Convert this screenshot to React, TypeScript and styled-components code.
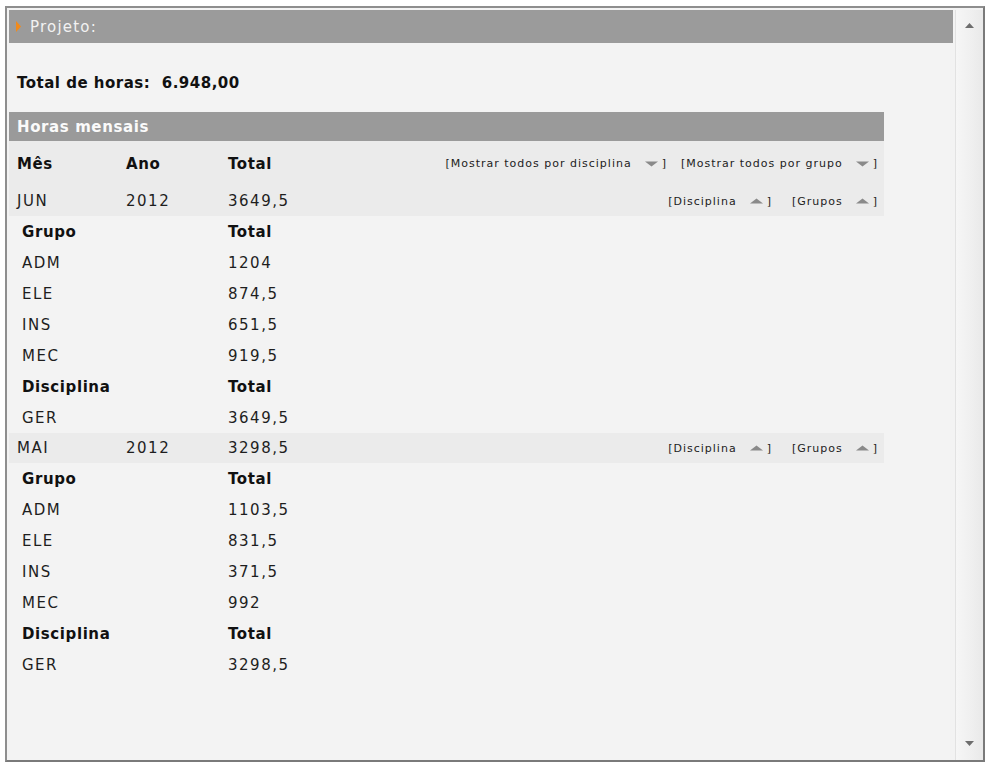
import React from "react";
import styled, { createGlobalStyle } from "styled-components";

const GlobalStyle = createGlobalStyle`
  html, body { margin: 0; padding: 0; background: #ffffff; }
  body { font-family: "DejaVu Sans", Verdana, sans-serif; color: #1c1c1c; }
  * { box-sizing: border-box; }
`;

const Frame = styled.div`
  margin: 6px 0 0 5px;
  width: 980px;
  height: 756px;
  border: 2px solid #8e8e8e;
  border-right-color: #7a7a7a;
  border-bottom-color: #7a7a7a;
  background: #f3f3f3;
  padding: 2px 0 0 2px;
  display: flex;
`;

const Main = styled.div`
  flex: 1;
  display: flex;
  flex-direction: column;
  min-width: 0;
`;

const Scrollbar = styled.div`
  width: 28px;
  margin-left: 2px;
  border-left: 1px solid #e2e2e2;
  background: linear-gradient(to right, #f6f6f6, #efefef 60%, #e9e9e9);
  display: flex;
  flex-direction: column;
  justify-content: space-between;
  align-items: center;
  padding: 13px 0 14px;
`;

const PanelHeader = styled.div`
  height: 33px;
  background: #9b9b9b;
  color: #f2f2f2;
  display: flex;
  align-items: center;
  padding-left: 7px;
  gap: 9px;
  font-size: 15px;
  letter-spacing: 1.2px;
`;

const Content = styled.div`
  padding: 30px 0 0 0;
`;

const TotalLine = styled.div`
  height: 20px;
  line-height: 20px;
  padding-left: 8px;
  font-weight: bold;
  font-size: 15px;
  letter-spacing: 0.5px;
  color: #111;
  margin-bottom: 19px;
`;

const Table = styled.div`
  width: 875px;
  display: flex;
  flex-direction: column;
`;

const TableTitle = styled.div`
  height: 29px;
  background: #9a9a9a;
  color: #fafafa;
  font-weight: bold;
  font-size: 15px;
  letter-spacing: 0.6px;
  display: flex;
  align-items: center;
  padding-left: 8px;
`;

const MonthRow = styled.div<{ $tall?: boolean }>`
  height: ${(p) => (p.$tall ? "45px" : "30px")};
  background: #ebebeb;
  display: grid;
  grid-template-columns: 109px 102px 1fr auto;
  align-items: center;
  padding-left: 8px;
  padding-right: 6px;
  font-size: 15px;
  letter-spacing: ${(p) => (p.$tall ? "0.6px" : "1.5px")};
  font-weight: ${(p) => (p.$tall ? "bold" : "normal")};
  color: ${(p) => (p.$tall ? "#111" : "#1e1e1e")};
`;

const SubRow = styled.div<{ $head?: boolean }>`
  height: 31px;
  display: grid;
  grid-template-columns: 206px 1fr;
  align-items: center;
  padding-left: 13px;
  font-size: 15px;
  letter-spacing: ${(p) => (p.$head ? "0.6px" : "1.5px")};
  font-weight: ${(p) => (p.$head ? "bold" : "normal")};
  color: ${(p) => (p.$head ? "#111" : "#1e1e1e")};
`;

const Links = styled.div<{ $gap: number }>`
  display: flex;
  gap: ${(p) => p.$gap}px;
  font-weight: normal;
  font-size: 11px;
  letter-spacing: 1px;
  color: #222;
`;

const LinkItem = styled.span`
  display: inline-flex;
  align-items: center;
  white-space: nowrap;
`;

const ArrowWrap = styled.span`
  display: inline-flex;
  margin: 0 4px 0 13px;
`;

const Tri = ({ down }: { down?: boolean }) => (
  <svg width="13" height="6" viewBox="0 0 13 6">
    <polygon
      points={down ? "0,0.5 13,0.5 6.5,5.5" : "0,5.5 13,5.5 6.5,0.5"}
      fill="#8a8a8a"
    />
  </svg>
);

const Link = ({ label, down }: { label: string; down?: boolean }) => (
  <LinkItem>
    [{label}
    <ArrowWrap>
      <Tri down={down} />
    </ArrowWrap>
    ]
  </LinkItem>
);

const Marker = () => (
  <svg width="5" height="11" viewBox="0 0 5 11">
    <polygon points="0,0 5,5.5 0,11" fill="#f08a1c" />
  </svg>
);

const ScrollArrow = ({ down }: { down?: boolean }) => (
  <svg width="9" height="5" viewBox="0 0 9 5">
    <polygon
      points={down ? "0,0 9,0 4.5,5" : "0,5 9,5 4.5,0"}
      fill="#6e6e6e"
    />
  </svg>
);

type Month = {
  mes: string;
  ano: string;
  total: string;
  grupos: [string, string][];
  disciplinas: [string, string][];
};

const months: Month[] = [
  {
    mes: "JUN",
    ano: "2012",
    total: "3649,5",
    grupos: [
      ["ADM", "1204"],
      ["ELE", "874,5"],
      ["INS", "651,5"],
      ["MEC", "919,5"],
    ],
    disciplinas: [["GER", "3649,5"]],
  },
  {
    mes: "MAI",
    ano: "2012",
    total: "3298,5",
    grupos: [
      ["ADM", "1103,5"],
      ["ELE", "831,5"],
      ["INS", "371,5"],
      ["MEC", "992"],
    ],
    disciplinas: [["GER", "3298,5"]],
  },
];

export default function App() {
  return (
    <>
      <GlobalStyle />
      <Frame>
        <Main>
          <PanelHeader>
            <Marker />
            <span>Projeto:</span>
          </PanelHeader>
          <Content>
            <TotalLine>Total de horas:&nbsp; 6.948,00</TotalLine>
            <Table>
              <TableTitle>Horas mensais</TableTitle>
              <MonthRow $tall>
                <span>Mês</span>
                <span>Ano</span>
                <span>Total</span>
                <Links $gap={14}>
                  <Link label="Mostrar todos por disciplina" down />
                  <Link label="Mostrar todos por grupo" down />
                </Links>
              </MonthRow>
              {months.map((m) => (
                <React.Fragment key={m.mes}>
                  <MonthRow>
                    <span>{m.mes}</span>
                    <span>{m.ano}</span>
                    <span>{m.total}</span>
                    <Links $gap={20}>
                      <Link label="Disciplina" />
                      <Link label="Grupos" />
                    </Links>
                  </MonthRow>
                  <SubRow $head>
                    <span>Grupo</span>
                    <span>Total</span>
                  </SubRow>
                  {m.grupos.map(([g, t]) => (
                    <SubRow key={g}>
                      <span>{g}</span>
                      <span>{t}</span>
                    </SubRow>
                  ))}
                  <SubRow $head>
                    <span>Disciplina</span>
                    <span>Total</span>
                  </SubRow>
                  {m.disciplinas.map(([d, t]) => (
                    <SubRow key={d}>
                      <span>{d}</span>
                      <span>{t}</span>
                    </SubRow>
                  ))}
                </React.Fragment>
              ))}
            </Table>
          </Content>
        </Main>
        <Scrollbar>
          <ScrollArrow />
          <ScrollArrow down />
        </Scrollbar>
      </Frame>
    </>
  );
}
